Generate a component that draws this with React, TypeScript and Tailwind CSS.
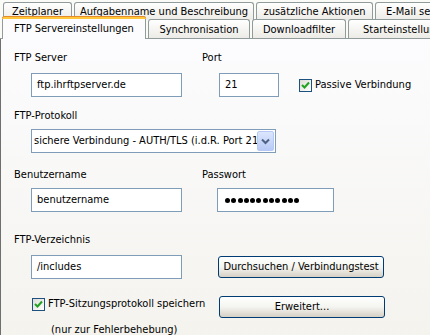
import React from "react";

const tabBase =
  "h-[18px] border border-b-0 border-[#919b9c] rounded-t-[3px] bg-gradient-to-b from-[#ffffff] to-[#ecebe6] flex items-center justify-center text-[11px] text-black leading-none whitespace-nowrap overflow-hidden";

function Check() {
  return (
    <div className="w-[13px] h-[13px] border border-[#1c5180] bg-gradient-to-br from-[#dcdcd7] to-[#ffffff] flex items-center justify-center shrink-0">
      <svg width="9" height="9" viewBox="0 0 9 9">
        <path d="M1 4 L3.5 6.5 L8 1.5" stroke="#21a121" strokeWidth="2" fill="none" />
      </svg>
    </div>
  );
}

function Input({ w, children }: { w: string; children: React.ReactNode }) {
  return (
    <div className={`${w} h-[24px] border border-[#7f9db9] bg-white flex items-center pl-[5px] text-[11px] text-black shrink-0`}>
      {children}
    </div>
  );
}

function XPButton({ children }: { children: React.ReactNode }) {
  return (
    <div className="w-[166px] h-[22px] rounded-[3px] border border-[#003c74] bg-gradient-to-b from-[#ffffff] via-[#f4f4f0] to-[#d6d0c5] flex items-center justify-center text-[11px] text-black shrink-0">
      {children}
    </div>
  );
}

export default function App() {
  const dots = Array.from({ length: 12 });
  return (
    <div className="w-[430px] h-[335px] overflow-hidden bg-[#fafaf7] font-['DejaVu_Sans_Condensed','DejaVu_Sans',sans-serif] text-[11px] text-black flex flex-col">
      {/* Row 1 tabs */}
      <div className="flex gap-[2px] pl-[3px] pt-[2px] bg-[#fafaf7]">
        <div className={`${tabBase} w-[69px] shrink-0`}>Zeitplaner</div>
        <div className={`${tabBase} w-[180px] shrink-0`}>Aufgabenname und Beschreibung</div>
        <div className={`${tabBase} w-[117px] shrink-0`}>zusätzliche Aktionen</div>
        <div className={`${tabBase} w-[70px] shrink-0 justify-start pl-[10px]`}>E-Mail server</div>
      </div>
      {/* Row 2 tabs */}
      <div className="flex items-end gap-[2px] pl-[2px] relative z-10 h-[19px] border-b border-[#919b9c]">
        <div className="w-[144px] h-[23px] -mb-[1px] border border-b-0 border-[#919b9c] rounded-t-[3px] bg-[#fcfcfe] flex flex-col shrink-0">
          <div className="h-[3px] -mx-[1px] -mt-[1px] rounded-t-[3px] bg-[#ffc83c] border-t border-[#e68b2c]" />
          <div className="flex-1 flex items-center justify-center leading-none pb-[2px]">FTP Servereinstellungen</div>
        </div>
        <div className={`${tabBase} h-[19px] w-[102px] shrink-0`}>Synchronisation</div>
        <div className={`${tabBase} h-[19px] w-[94px] shrink-0`}>Downloadfilter</div>
        <div className={`${tabBase} h-[19px] w-[90px] shrink-0 justify-start pl-[14px]`}>Starteinstellungen</div>
      </div>
      {/* Panel */}
      <div className="flex-1 border-l border-[#6f6f6f] bg-gradient-to-b from-[#fcfcfe] to-[#f4f3ee] pl-[13px] pt-[12px]">
        <div className="grid grid-cols-[188px_1fr]">
          <div>
            <div className="h-[14px] leading-[14px]">FTP Server</div>
            <div className="pl-[17px] mt-[8px]">
              <Input w="w-[151px]">ftp.ihrftpserver.de</Input>
            </div>
          </div>
          <div>
            <div className="h-[14px] leading-[14px]">Port</div>
            <div className="flex items-center mt-[8px] pl-[17px]">
              <Input w="w-[60px]">21</Input>
              <div className="flex items-center gap-[3px] ml-[20px]">
                <Check />
                <span className="whitespace-nowrap">Passive Verbindung</span>
              </div>
            </div>
          </div>
        </div>

        <div className="mt-[12px] h-[14px] leading-[14px]">FTP-Protokoll</div>
        <div className="pl-[17px] mt-[6px]">
          <div className="w-[245px] h-[24px] border border-[#7f9db9] bg-white flex items-center pl-[2px] pr-[1px]">
            <span className="flex-1 whitespace-nowrap overflow-hidden">sichere Verbindung - AUTH/TLS (i.d.R. Port 21)</span>
            <div className="w-[17px] h-[20px] rounded-[2px] border border-[#b5c8f6] bg-gradient-to-b from-[#dce6fd] to-[#b7c9f5] flex items-center justify-center shrink-0">
              <svg width="9" height="7" viewBox="0 0 9 7">
                <path d="M1 1.5 L4.5 5 L8 1.5" stroke="#4d6185" strokeWidth="2" fill="none" />
              </svg>
            </div>
          </div>
        </div>

        <div className="grid grid-cols-[188px_1fr] mt-[15px]">
          <div>
            <div className="h-[14px] leading-[14px]">Benutzername</div>
            <div className="pl-[17px] mt-[6px]">
              <Input w="w-[151px]">benutzername</Input>
            </div>
          </div>
          <div>
            <div className="h-[14px] leading-[14px]">Passwort</div>
            <div className="mt-[6px] pl-[15px]">
              <Input w="w-[117px]">
                <div className="flex gap-[1.3px] pl-[2px]">
                  {dots.map((_, i) => (
                    <div key={i} className="w-[5px] h-[5px] rounded-full bg-black" />
                  ))}
                </div>
              </Input>
            </div>
          </div>
        </div>

        <div className="mt-[21px] h-[14px] leading-[14px]">FTP-Verzeichnis</div>
        <div className="flex items-center pl-[17px] mt-[8px]">
          <Input w="w-[151px]">/includes</Input>
          <div className="ml-[36px]">
            <XPButton>Durchsuchen / Verbindungstest</XPButton>
          </div>
        </div>

        <div className="flex items-start pl-[18px] mt-[17px]">
          <div className="w-[187px]">
            <div className="flex items-center gap-[3px]">
              <Check />
              <span>FTP-Sitzungsprotokoll speichern</span>
            </div>
            <div className="pl-[19px] mt-[9px]">(nur zur Fehlerbehebung)</div>
          </div>
          <XPButton>Erweitert...</XPButton>
        </div>
      </div>
    </div>
  );
}
